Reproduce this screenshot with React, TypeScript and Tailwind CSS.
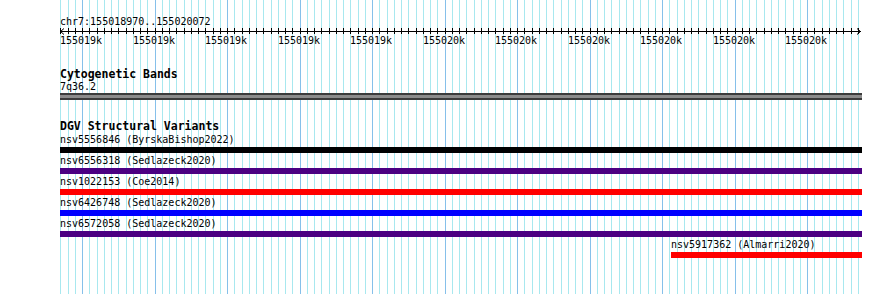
import React from "react";

const mono = "font-['DejaVu_Sans_Mono','Liberation_Mono',monospace]";

const START = 60.3;
const STEP = 7.25;
const TICKS = Array.from({ length: 111 }, (_, k) => k);
const LABELS = [
  "155019k", "155019k", "155019k", "155019k", "155019k",
  "155020k", "155020k", "155020k", "155020k", "155020k", "155020k",
];

type Variant = { name: string; color: string; from?: number; width?: number };

const variants: Variant[] = [
  { name: "nsv5556846 (ByrskaBishop2022)", color: "#000000" },
  { name: "nsv6556318 (Sedlazeck2020)", color: "#4b0082" },
  { name: "nsv1022153 (Coe2014)", color: "#ff0000" },
  { name: "nsv6426748 (Sedlazeck2020)", color: "#0000ff" },
  { name: "nsv6572058 (Sedlazeck2020)", color: "#4b0082" },
  { name: "nsv5917362 (Almarri2020)", color: "#ff0000", from: 611, width: 191 },
];

function Gridlines() {
  return (
    <svg className="absolute inset-0" width={890} height={294}>
      {TICKS.map((k) => {
        const x = Math.round(START + k * STEP) + 0.5;
        const major = (k - 3) % 10 === 0;
        return (
          <line
            key={k}
            x1={x}
            x2={x}
            y1={0}
            y2={294}
            stroke={major ? "#86c0ea" : "#a8e8ef"}
            strokeWidth={1}
          />
        );
      })}
    </svg>
  );
}

function Ruler() {
  // line sits at y=2.5 inside this box (31.5 on the page)
  return (
    <svg width={802} height={19} className="block overflow-visible">
      <line x1={0} x2={801} y1={2.5} y2={2.5} stroke="#000" />
      {TICKS.map((k) => {
        const x = Math.round(START + k * STEP) - 60 + 0.5;
        return <line key={k} x1={x} x2={x} y1={-1} y2={5} stroke="#000" />;
      })}
      <polyline points="4,-0.5 0.5,2.5 4,5.5" fill="none" stroke="#000" />
      <polyline points="797,-0.5 800.5,2.5 797,5.5" fill="none" stroke="#000" />
      {LABELS.map((l, i) => (
        <text
          key={i}
          x={Math.round(START + i * 10 * STEP) - 60}
          y={15}
          fontSize={10}
          fontFamily="'DejaVu Sans Mono', monospace"
          fill="#000"
        >
          {l}
        </text>
      ))}
    </svg>
  );
}

function VariantRow({ v }: { v: Variant }) {
  const ml = v.from ?? 0;
  return (
    <div style={{ marginLeft: ml }}>
      <div className="h-[15px] text-[10px] leading-[16px] text-black whitespace-nowrap">{v.name}</div>
      <div className="h-[6px]" style={{ width: v.width ?? 802 - ml, backgroundColor: v.color }} />
    </div>
  );
}

export default function App() {
  return (
    <div className={`relative w-[890px] h-[294px] overflow-hidden bg-white ${mono}`}>
      <Gridlines />
      <div className="relative flex flex-col w-[862px] pl-[60px] pt-[14px]">
        <div className="text-[10px] leading-[15px] text-black">chr7:155018970..155020072</div>
        <Ruler />

        <div className="mt-[19px] text-[11.5px] font-bold leading-[14px] text-black">Cytogenetic Bands</div>
        <div className="text-[10px] leading-[11px] text-black">7q36.2</div>
        <div className="mt-[1px] h-[7px] w-[802px] border-y-2 border-[#3c3c3c] bg-[#8c8c8c]" />

        <div className="mt-[20px] text-[11.5px] font-bold leading-[12px] text-black">DGV Structural Variants</div>
        {variants.map((v) => (
          <VariantRow key={v.name} v={v} />
        ))}
      </div>
    </div>
  );
}
